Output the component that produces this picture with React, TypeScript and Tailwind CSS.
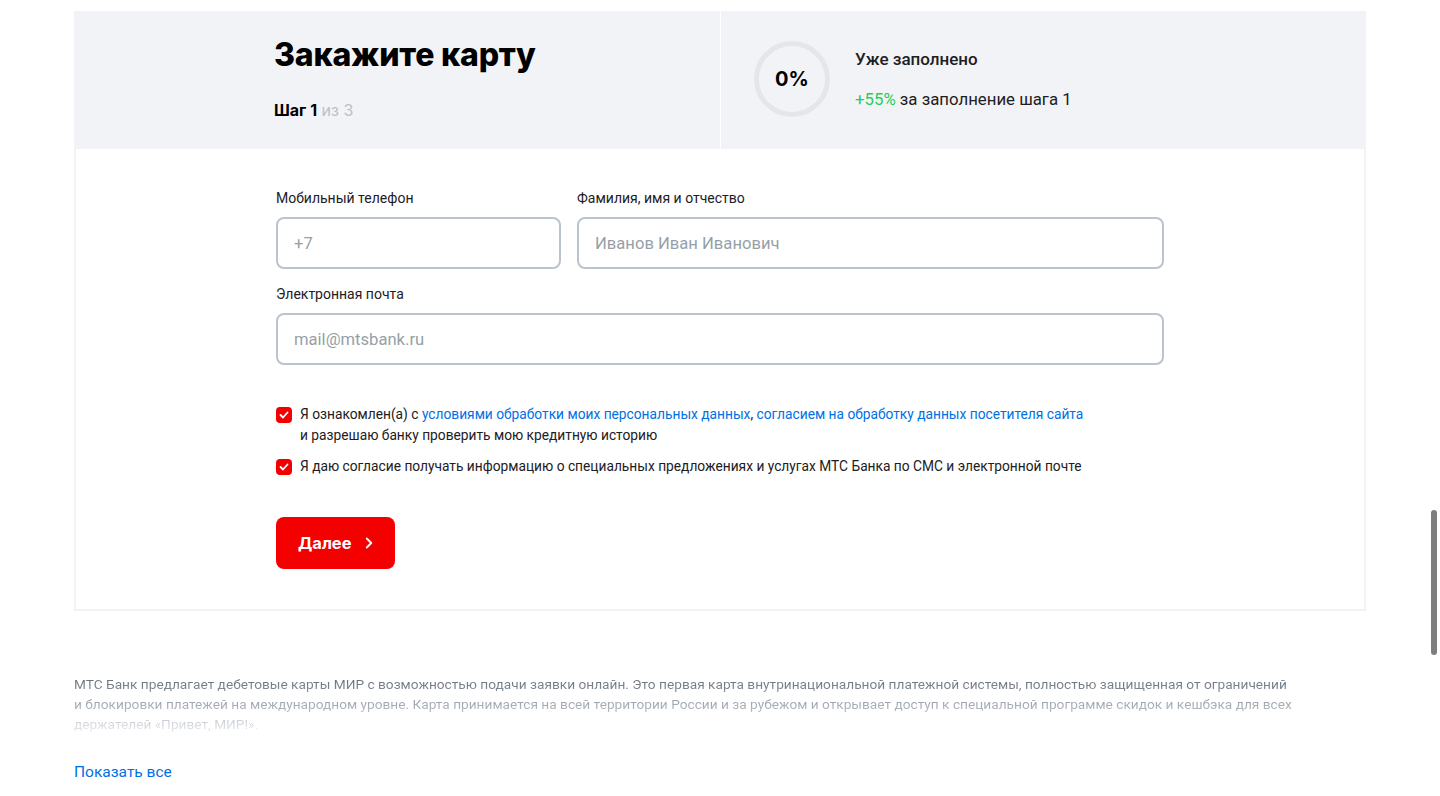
import { ChevronRight } from 'lucide-react'

const body = "font-['Roboto','Liberation_Sans',sans-serif]"
const wide = "font-['Inter','Liberation_Sans',sans-serif]"

function Field({ label, placeholder, className }: { label: string; placeholder: string; className?: string }) {
  return (
    <label className={`flex flex-col ${className ?? ''}`}>
      <span className="text-[14px] leading-5 text-[#1d2023] mb-[9px]">{label}</span>
      <input
        placeholder={placeholder}
        className="h-[52px] w-full rounded-lg border-2 border-[#bcc3d0] bg-white px-4 text-[16.6px] text-[#1d2023] outline-none placeholder:text-[#969fa8]"
      />
    </label>
  )
}

function Check({ children }: { children: React.ReactNode }) {
  return (
    <div className="flex items-start gap-2">
      <span className="mt-[2.5px] flex h-4 w-4 shrink-0 items-center justify-center rounded-[4px] bg-[#f50000]">
        <svg width="10" height="8" viewBox="0 0 10 8" fill="none">
          <path d="M1.5 4l2.5 2.5L8.5 1.5" stroke="white" strokeWidth="1.8" strokeLinecap="round" strokeLinejoin="round" />
        </svg>
      </span>
      <p className="text-[13.75px] leading-[21px] text-[#1d2023]">{children}</p>
    </div>
  )
}

export default function App() {
  return (
    <div className={`min-h-[796px] bg-white ${body}`}>
      <div className="ml-[74px] w-[1292px] pt-[11px]">
        {/* header */}
        <div className="grid h-[138px] grid-cols-[646px_1fr] bg-[#f2f3f7]">
          <div className="pl-[200px] pt-[24px]">
            <h1 className={`${wide} text-[32px] font-extrabold leading-[40px] tracking-[-0.2px] text-black`}>
              Закажите карту
            </h1>
            <div className={`${wide} mt-[25px] text-[16px] leading-5`}>
              <span className="font-bold text-black">Шаг 1</span>
              <span className="text-[#bbc1c7]"> из 3</span>
            </div>
          </div>
          <div className="flex items-center border-l border-white pl-[33px] pb-[3px]">
            <div className="flex h-[76px] w-[76px] items-center justify-center rounded-full border-[5px] border-[#e4e6ea]">
              <span className={`${wide} text-[20px] font-bold text-black`}>0%</span>
            </div>
            <div className="ml-[25px] flex flex-col">
              <span className="text-[17px] font-medium leading-5 text-[#1d2023]">Уже заполнено</span>
              <span className="mt-5 text-[16.8px] leading-5 text-[#1d2023]">
                <span className="text-[#26cd58]">+55%</span> за заполнение шага 1
              </span>
            </div>
          </div>
        </div>

        {/* form */}
        <div className="border-2 border-t-0 border-[#f2f3f7] pl-[200px] pt-[39px] pb-[40px]">
          <div className="w-[888px]">
            <div className="flex gap-4">
              <Field label="Мобильный телефон" placeholder="+7" className="w-[285px]" />
              <Field label="Фамилия, имя и отчество" placeholder="Иванов Иван Иванович" className="flex-1" />
            </div>
            <Field label="Электронная почта" placeholder="mail@mtsbank.ru" className="mt-[15px]" />

            <div className="mt-[39px] flex flex-col gap-[10px]">
              <Check>
                Я ознакомлен(а) с{' '}
                <a className="text-[#0070e5]">условиями обработки моих персональных данных</a>,{' '}
                <a className="text-[#0070e5]">согласием на обработку данных посетителя сайта</a>
                <br />и разрешаю банку проверить мою кредитную историю
              </Check>
              <Check>
                Я даю согласие получать информацию о специальных предложениях и услугах МТС Банка по СМС и
                электронной почте
              </Check>
            </div>

            <button className="mt-[40px] flex h-[52px] w-[119px] items-center gap-[8px] rounded-lg bg-[#f50000] pl-[22px] text-white">
              <span className={`${wide} text-[16.5px] font-bold`}>Далее</span>
              <ChevronRight size={18} strokeWidth={2.5} />
            </button>
          </div>
        </div>

        {/* seo text */}
        <p className="mt-[63px] w-[1240px] bg-linear-to-b from-[#5d6670] via-[#a2a9b2] to-[#eceef1] bg-clip-text text-[13.7px] leading-[20px] text-transparent">
          МТС Банк предлагает дебетовые карты МИР с возможностью подачи заявки онлайн. Это первая карта
          внутринациональной платежной системы, полностью защищенная от ограничений
          <br />и блокировки платежей на международном уровне. Карта принимается на всей территории России и за
          рубежом и открывает доступ к специальной программе скидок и кешбэка для всех держателей «Привет, МИР!».
        </p>
        <a className="mt-[28px] inline-block text-[15.5px] leading-5 text-[#0070e5]">Показать все</a>
      </div>

      <div className="fixed right-[3px] top-[510px] h-[145px] w-[6px] rounded-full bg-[#7f7f7f]" />
    </div>
  )
}
